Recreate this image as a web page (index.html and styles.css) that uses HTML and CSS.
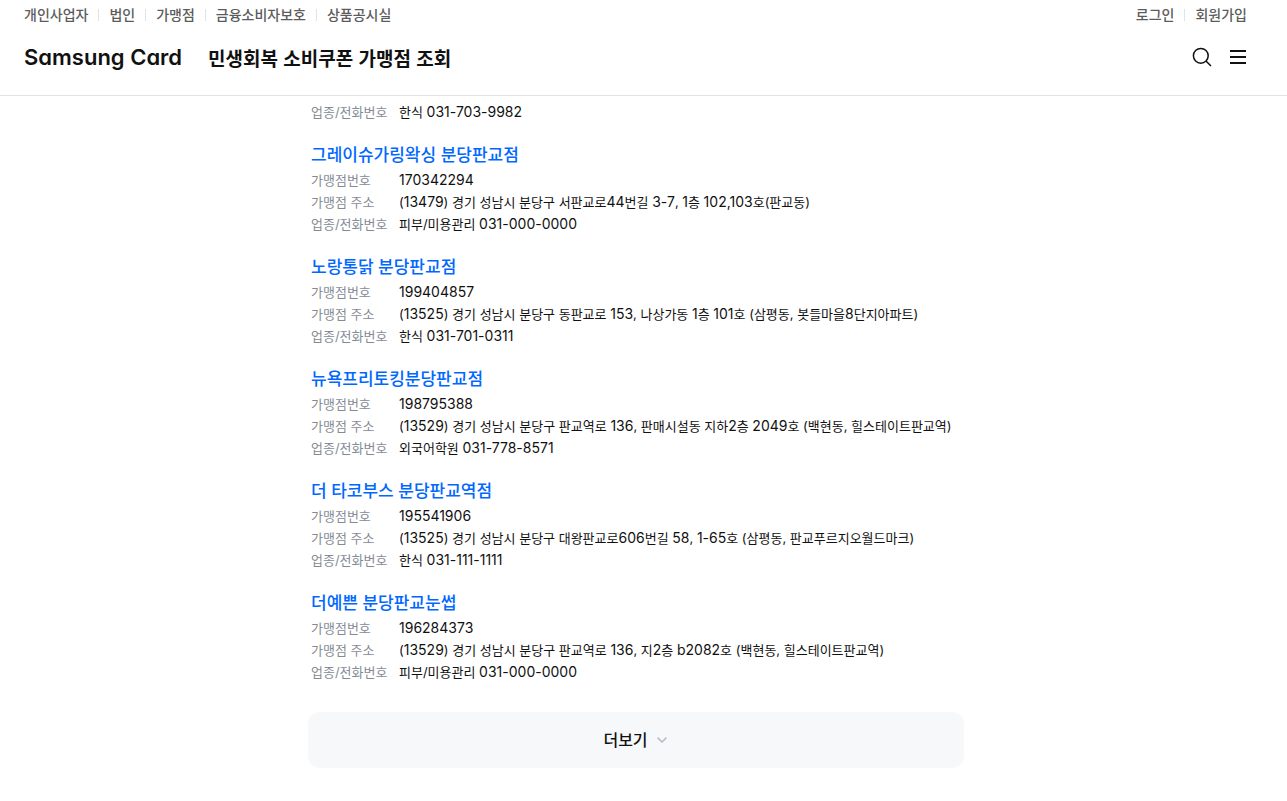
FILE: index.html
```html
<!DOCTYPE html>
<html lang="ko">
<head>
<meta charset="utf-8">
<meta name="viewport" content="width=device-width, initial-scale=1">
<title>민생회복 소비쿠폰 가맹점 조회</title>
<link rel="stylesheet" href="styles.css">
</head>
<body>
<header class="header">
  <div class="topbar">
    <nav class="links" aria-label="사이트">
      <a href="#">개인사업자</a><a href="#">법인</a><a href="#">가맹점</a><a href="#">금융소비자보호</a><a href="#">상품공시실</a>
    </nav>
    <nav class="links" aria-label="회원">
      <a href="#">로그인</a><a href="#">회원가입</a>
    </nav>
  </div>
  <div class="mainbar">
    <a class="logo" href="#">Samsung Card</a>
    <h1 class="page-title">민생회복 소비쿠폰 가맹점 조회</h1>
    <div class="tools">
      <button class="icon-button" type="button" aria-label="검색">
        <svg width="20" height="20" viewBox="0 0 20 20" fill="none" stroke="#111" stroke-width="1.5"><circle cx="8.8" cy="8.8" r="7.4"/><path d="M14 14l5 5"/></svg>
      </button>
      <button class="icon-button" type="button" aria-label="메뉴">
        <svg width="16" height="20" viewBox="0 0 16 20" fill="#111"><path d="M0 3h16v2H0zM0 9h16v2H0zM0 15h16v2H0z"/></svg>
      </button>
    </div>
  </div>
</header>
<main class="content">
  <ul class="stores">
    <li class="store">
      <dl class="details">
        <dt>업종/전화번호</dt><dd>한식 <span class="num">031-703-9982</span></dd>
      </dl>
    </li>
    <li class="store">
      <h2 class="name"><a href="#">그레이슈가링왁싱 분당판교점</a></h2>
      <dl class="details">
        <dt>가맹점번호</dt><dd><span class="num">170342294</span></dd>
        <dt>가맹점 주소</dt><dd>(<span class="num">13479</span>) 경기 성남시 분당구 서판교로<span class="num">44</span>번길 <span class="num">3-7</span>, <span class="num">1</span>층 <span class="num">102,103</span>호(판교동)</dd>
        <dt>업종/전화번호</dt><dd>피부/미용관리 <span class="num">031-000-0000</span></dd>
      </dl>
    </li>
    <li class="store">
      <h2 class="name"><a href="#">노랑통닭 분당판교점</a></h2>
      <dl class="details">
        <dt>가맹점번호</dt><dd><span class="num">199404857</span></dd>
        <dt>가맹점 주소</dt><dd>(<span class="num">13525</span>) 경기 성남시 분당구 동판교로 <span class="num">153</span>, 나상가동 <span class="num">1</span>층 <span class="num">101</span>호 (삼평동, 봇들마을<span class="num">8</span>단지아파트)</dd>
        <dt>업종/전화번호</dt><dd>한식 <span class="num">031-701-0311</span></dd>
      </dl>
    </li>
    <li class="store">
      <h2 class="name"><a href="#">뉴욕프리토킹분당판교점</a></h2>
      <dl class="details">
        <dt>가맹점번호</dt><dd><span class="num">198795388</span></dd>
        <dt>가맹점 주소</dt><dd>(<span class="num">13529</span>) 경기 성남시 분당구 판교역로 <span class="num">136</span>, 판매시설동 지하<span class="num">2</span>층 <span class="num">2049</span>호 (백현동, 힐스테이트판교역)</dd>
        <dt>업종/전화번호</dt><dd>외국어학원 <span class="num">031-778-8571</span></dd>
      </dl>
    </li>
    <li class="store">
      <h2 class="name"><a href="#">더 타코부스 분당판교역점</a></h2>
      <dl class="details">
        <dt>가맹점번호</dt><dd><span class="num">195541906</span></dd>
        <dt>가맹점 주소</dt><dd>(<span class="num">13525</span>) 경기 성남시 분당구 대왕판교로<span class="num">606</span>번길 <span class="num">58</span>, <span class="num">1-65</span>호 (삼평동, 판교푸르지오월드마크)</dd>
        <dt>업종/전화번호</dt><dd>한식 <span class="num">031-111-1111</span></dd>
      </dl>
    </li>
    <li class="store">
      <h2 class="name"><a href="#">더예쁜 분당판교눈썹</a></h2>
      <dl class="details">
        <dt>가맹점번호</dt><dd><span class="num">196284373</span></dd>
        <dt>가맹점 주소</dt><dd>(<span class="num">13529</span>) 경기 성남시 분당구 판교역로 <span class="num">136</span>, 지<span class="num">2</span>층 <span class="num">b2082</span>호 (백현동, 힐스테이트판교역)</dd>
        <dt>업종/전화번호</dt><dd>피부/미용관리 <span class="num">031-000-0000</span></dd>
      </dl>
    </li>
  </ul>
  <button class="more" type="button">더보기
    <svg width="12" height="6" viewBox="0 0 12 6" fill="none" stroke="#b9bec8" stroke-width="1.6"><path d="M.6.6L5 5 9.4.6"/></svg>
  </button>
</main>
</body>
</html>
```

FILE: styles.css
```css
* { box-sizing: border-box; }

body {
  margin: 0;
  background: #fff;
  color: #111;
  font: 13px/22px Inter, "Noto Sans CJK KR", sans-serif;
}

h1, h2, ul, dl, dd { margin: 0; padding: 0; }
a { color: inherit; text-decoration: none; }
button { border: 0; padding: 0; font: inherit; color: inherit; cursor: pointer; }

.header {
  position: sticky;
  top: 0;
  padding: 4px 40px 0 24px;
  background: #fff;
  border-bottom: 1px solid #e1e3ea;
}

.topbar { display: flex; justify-content: space-between; }

.links {
  display: flex;
  align-items: center;
  color: #5c5c5c;
  font-size: 14px;
  font-weight: 500;
}

.links a + a { display: flex; align-items: center; }

.links a + a::before {
  content: "";
  width: 1px;
  height: 12px;
  margin: 0 10px;
  background: #e1e3ea;
}

.mainbar {
  display: flex;
  align-items: center;
  height: 69px;
  padding: 0 1px 7px 0;
}

.logo {
  font-size: 22px;
  font-weight: 600;
  line-height: 30px;
  font-feature-settings: "cv11";
}

.page-title {
  margin-left: 26px;
  padding-top: 2px;
  font: 700 19px/30px "Noto Sans CJK KR", sans-serif;
}

.tools { display: flex; gap: 18px; margin-left: auto; }
.icon-button { display: flex; background: none; }

.content {
  max-width: 671px;
  margin: 0 auto;
  padding: 5px 15px 33px 0;
}

.stores {
  display: grid;
  gap: 16px;
  padding: 0 3px;
  list-style: none;
}

.name {
  padding-top: 2px;
  color: #0068ff;
  font-size: 17px;
  font-weight: 500;
  line-height: 28px;
}

.details { display: grid; grid-template-columns: 88px 1fr; }
.details dt { color: #858b96; }
.num { font-size: 14px; line-height: 20px; }

.more {
  display: flex;
  align-items: center;
  justify-content: center;
  gap: 9px;
  width: 100%;
  height: 56px;
  margin-top: 29px;
  border-radius: 12px;
  background: #f7f8fa;
  font-size: 16px;
  font-weight: 500;
}
```
